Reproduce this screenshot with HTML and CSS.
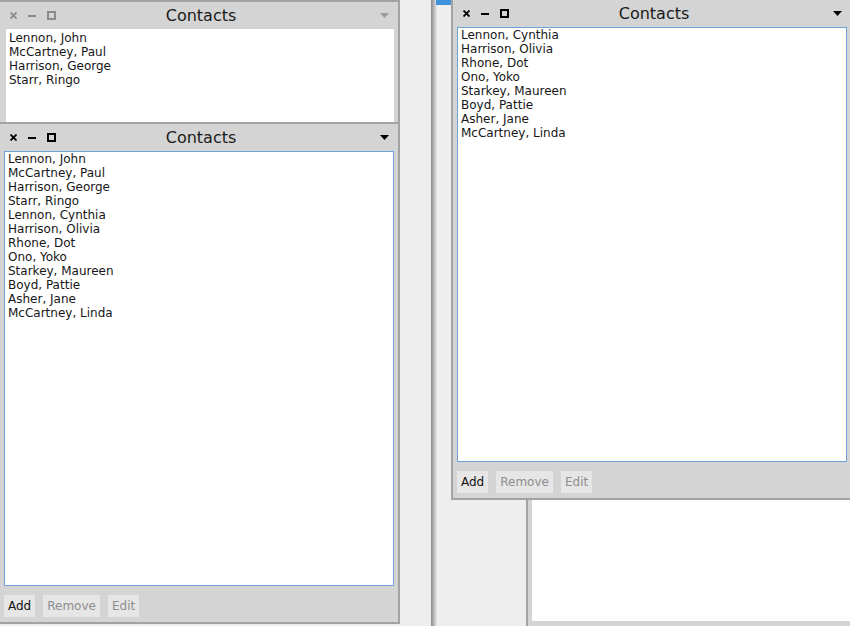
FILE: index.html
```html
<!DOCTYPE html>
<html>
<head>
<meta charset="utf-8">
<link rel="stylesheet" href="styles.css">
</head>
<body>
<div class="desktop">
  <div class="splitter"></div>
  <div class="strip"></div>
  <div class="bgwin"><div class="bgwin-pane"></div></div>

  <div class="win win-back inactive">
    <div class="titlebar">
      <div class="controls">
        <svg class="ic" width="7" height="7" viewBox="0 0 7 7"><path d="M0.5 0.5L6.5 6.5M6.5 0.5L0.5 6.5" stroke="currentColor" stroke-width="1.8" fill="none"/></svg>
        <svg class="ic" width="8" height="2" viewBox="0 0 8 2"><rect width="8" height="2" fill="currentColor"/></svg>
        <svg class="ic" width="9" height="9" viewBox="0 0 9 9"><rect x="1" y="1" width="7" height="7" stroke="currentColor" stroke-width="2" fill="none"/></svg>
      </div>
      <div class="title">Contacts</div>
      <svg class="menu" width="9" height="5" viewBox="0 0 9 5"><path d="M0 0H9L4.5 5Z" fill="currentColor"/></svg>
    </div>
    <div class="body">
      <div class="list">
        <div>Lennon, John</div>
        <div>McCartney, Paul</div>
        <div>Harrison, George</div>
        <div>Starr, Ringo</div>
      </div>
    </div>
  </div>

  <div class="win win-front">
    <div class="titlebar">
      <div class="controls">
        <svg class="ic" width="7" height="7" viewBox="0 0 7 7"><path d="M0.5 0.5L6.5 6.5M6.5 0.5L0.5 6.5" stroke="currentColor" stroke-width="1.8" fill="none"/></svg>
        <svg class="ic" width="8" height="2" viewBox="0 0 8 2"><rect width="8" height="2" fill="currentColor"/></svg>
        <svg class="ic" width="9" height="9" viewBox="0 0 9 9"><rect x="1" y="1" width="7" height="7" stroke="currentColor" stroke-width="2" fill="none"/></svg>
      </div>
      <div class="title">Contacts</div>
      <svg class="menu" width="9" height="5" viewBox="0 0 9 5"><path d="M0 0H9L4.5 5Z" fill="currentColor"/></svg>
    </div>
    <div class="body">
      <div class="list">
        <div>Lennon, John</div>
        <div>McCartney, Paul</div>
        <div>Harrison, George</div>
        <div>Starr, Ringo</div>
        <div>Lennon, Cynthia</div>
        <div>Harrison, Olivia</div>
        <div>Rhone, Dot</div>
        <div>Ono, Yoko</div>
        <div>Starkey, Maureen</div>
        <div>Boyd, Pattie</div>
        <div>Asher, Jane</div>
        <div>McCartney, Linda</div>
      </div>
      <div class="buttons">
        <button class="btn">Add</button>
        <button class="btn disabled">Remove</button>
        <button class="btn disabled">Edit</button>
      </div>
    </div>
  </div>

  <div class="win win-right">
    <div class="titlebar">
      <div class="controls">
        <svg class="ic" width="7" height="7" viewBox="0 0 7 7"><path d="M0.5 0.5L6.5 6.5M6.5 0.5L0.5 6.5" stroke="currentColor" stroke-width="1.8" fill="none"/></svg>
        <svg class="ic" width="8" height="2" viewBox="0 0 8 2"><rect width="8" height="2" fill="currentColor"/></svg>
        <svg class="ic" width="9" height="9" viewBox="0 0 9 9"><rect x="1" y="1" width="7" height="7" stroke="currentColor" stroke-width="2" fill="none"/></svg>
      </div>
      <div class="title">Contacts</div>
      <svg class="menu" width="9" height="5" viewBox="0 0 9 5"><path d="M0 0H9L4.5 5Z" fill="currentColor"/></svg>
    </div>
    <div class="body">
      <div class="list">
        <div>Lennon, Cynthia</div>
        <div>Harrison, Olivia</div>
        <div>Rhone, Dot</div>
        <div>Ono, Yoko</div>
        <div>Starkey, Maureen</div>
        <div>Boyd, Pattie</div>
        <div>Asher, Jane</div>
        <div>McCartney, Linda</div>
      </div>
      <div class="buttons">
        <button class="btn">Add</button>
        <button class="btn disabled">Remove</button>
        <button class="btn disabled">Edit</button>
      </div>
    </div>
  </div>
</div>
</body>
</html>
```
FILE: styles.css
```css
html, body {
  margin: 0;
  padding: 0;
}
body {
  width: 850px;
  height: 626px;
  overflow: hidden;
  background: #eeeeee;
  font-family: "DejaVu Sans", "Liberation Sans", sans-serif;
}
.desktop {
  position: relative;
  width: 850px;
  height: 626px;
  overflow: hidden;
}
.splitter {
  position: absolute;
  left: 431px;
  top: 0;
  width: 6px;
  height: 626px;
  background: linear-gradient(to right, #8a8a8a, #a8a8a8 35%, #d2d2d2 75%, #e8e8e8);
}
.strip {
  position: absolute;
  left: 436px;
  top: 0;
  width: 20px;
  height: 5px;
  background: #3f93dd;
}
.bgwin {
  position: absolute;
  left: 526px;
  top: 300px;
  width: 340px;
  height: 340px;
  box-sizing: border-box;
  border-left: 2px solid #a3a3a3;
  background: #d4d4d4;
  padding: 0 0 19px 4px;
  display: flex;
}
.bgwin-pane {
  flex: 1;
  background: #ffffff;
}
.win {
  position: absolute;
  width: 402px;
  height: 502px;
  box-sizing: border-box;
  border: 2px solid #a3a3a3;
  background: #d4d4d4;
  display: flex;
  flex-direction: column;
  color: #111;
}
.win-back {
  left: -2px;
  top: 0;
}
.win-front {
  left: -2px;
  top: 122px;
}
.win-right {
  left: 451px;
  top: -2px;
}
.titlebar {
  height: 27px;
  flex: none;
  display: grid;
  grid-template-columns: 1fr auto 1fr;
  align-items: center;
  padding: 0 8px 0 12px;
}
.controls {
  display: flex;
  align-items: center;
  gap: 11px;
  margin-left: -2px;
  color: #000;
}
.inactive .controls {
  color: #8a8a8a;
}
.ic {
  display: block;
}
.title {
  font-size: 16px;
  line-height: 27px;
  color: #1a1a1a;
}
.menu {
  justify-self: end;
  color: #000;
  margin-right: 1px;
}
.inactive .menu {
  color: #9a9a9a;
}
.body {
  flex: 1;
  display: flex;
  flex-direction: column;
  padding: 0 4px 5px;
}
.list {
  height: 435px;
  flex: none;
  box-sizing: border-box;
  border: 1px solid #6ea2d8;
  background: #ffffff;
  padding: 0 3px;
  font-size: 12px;
  line-height: 14px;
  color: #161616;
}
.inactive .list {
  border-color: #ffffff;
  margin-left: 2px;
  padding-left: 2px;
  padding-top: 1px;
}
.buttons {
  display: flex;
  gap: 8px;
  margin-top: 9px;
}
.btn {
  height: 22px;
  padding: 0 4px;
  margin: 0;
  border: none;
  background: #e6e6e6;
  font-family: "DejaVu Sans", "Liberation Sans", sans-serif;
  font-size: 12px;
  line-height: 22px;
  color: #111;
}
.btn.disabled {
  color: #8e8e8e;
}
```
